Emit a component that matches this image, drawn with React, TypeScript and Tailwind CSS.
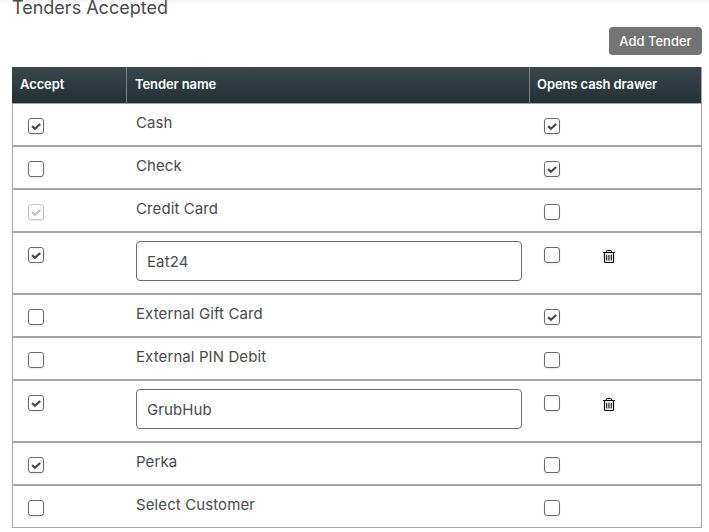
import { useState } from "react";

type Tender = {
  name: string;
  accept: boolean;
  drawer: boolean;
  locked?: boolean;
  custom?: boolean;
};

const initialTenders: Tender[] = [
  { name: "Cash", accept: true, drawer: true },
  { name: "Check", accept: false, drawer: true },
  { name: "Credit Card", accept: true, drawer: false, locked: true },
  { name: "Eat24", accept: true, drawer: false, custom: true },
  { name: "External Gift Card", accept: false, drawer: true },
  { name: "External PIN Debit", accept: false, drawer: false },
  { name: "GrubHub", accept: true, drawer: false, custom: true },
  { name: "Perka", accept: true, drawer: false },
  { name: "Select Customer", accept: false, drawer: false },
];

function Checkbox({
  checked,
  disabled,
  onChange,
}: {
  checked: boolean;
  disabled?: boolean;
  onChange: () => void;
}) {
  return (
    <button
      type="button"
      role="checkbox"
      aria-checked={checked}
      disabled={disabled}
      onClick={onChange}
      className={`flex h-4 w-4 shrink-0 items-center justify-center rounded-[3px] border bg-white shadow-[0_1px_2px_rgba(0,0,0,0.08)] ${
        disabled ? "border-[#c4c4c4] text-[#c4c4c4]" : "border-[#6b6b6b] text-[#4a4a4a]"
      }`}
    >
      {checked && (
        <svg className="h-3.5 w-3.5" viewBox="0 0 14 14" fill="none" stroke="currentColor" strokeWidth="2.3">
          <path d="M3.1 7.1l2.8 2.7L11.2 5" />
        </svg>
      )}
    </button>
  );
}

function TrashIcon() {
  return (
    <svg className="h-3.5 w-3" viewBox="0 0 12 14" fill="none" stroke="#000">
      <path d="M0 2.5h12" strokeWidth="1.1" />
      <path d="M3.5 2.2V1.3q0-.8.8-.8h3.4q.8 0 .8.8v.9" strokeWidth="1" />
      <path d="M1.5 3v8.5q0 1 1 1h7q1 0 1-1V3" strokeWidth="1.2" />
      <path d="M3.5 4.8v5.7M5.2 4.8v5.7M6.8 4.8v5.7M8.5 4.8v5.7" strokeWidth="0.8" />
    </svg>
  );
}

export default function App() {
  const [tenders, setTenders] = useState(initialTenders);

  const update = (index: number, patch: Partial<Tender>) => {
    setTenders(tenders.map((t, i) => (i === index ? { ...t, ...patch } : t)));
  };

  return (
    <div className="h-[532px] bg-white bg-linear-to-b from-[#f4f4f4] to-white to-[4px] pr-[7px] pl-3 font-['Inter','Liberation_Sans',sans-serif] text-[#4a4a4a]">
      <h2 className="h-4 text-[18px] leading-4">Tenders Accepted</h2>

      <div className="mt-[11px] mb-3 flex justify-end">
        <button
          onClick={() => setTenders([...tenders, { name: "", accept: true, drawer: false, custom: true }])}
          className="h-7 w-[93px] rounded bg-[#737373] text-[13px] leading-[28px] font-medium text-white"
        >
          Add Tender
        </button>
      </div>

      {/* Header */}
      <div className="grid h-9 grid-cols-[115px_403px_1fr] border-r border-[#a6a6a6] bg-linear-to-b from-[#37474b] to-[#233137] text-[13px] leading-[35px] font-semibold tracking-[-0.1px] text-white">
        <div className="border-r border-[#7b8487] pl-2">Accept</div>
        <div className="border-r border-[#7b8487] pl-2">Tender name</div>
        <div className="pl-[7px]">Opens cash drawer</div>
      </div>

      {tenders.map((tender, i) => (
        <div
          key={i}
          className={`grid grid-cols-[123px_408px_67px_1fr] items-start border border-[#a6a6a6] bg-white ${
            tender.custom ? "h-[62px]" : "h-[43px]"
          }`}
        >
          <div className="pt-3.5 pl-[15px]">
            <Checkbox
              checked={tender.accept}
              disabled={tender.locked}
              onChange={() => update(i, { accept: !tender.accept })}
            />
          </div>
          {tender.custom ? (
            <div className="pt-2 pr-[22px]">
              <input
                value={tender.name}
                onChange={(e) => update(i, { name: e.target.value })}
                className="block h-10 w-full rounded border border-[#6b6b6b] px-2.5 text-[15px] tracking-[0.1px] outline-none"
              />
            </div>
          ) : (
            <div className="pt-2 text-[15px] leading-[22px] tracking-[0.1px]">{tender.name}</div>
          )}
          <div className="pt-3.5">
            <Checkbox checked={tender.drawer} onChange={() => update(i, { drawer: !tender.drawer })} />
          </div>
          {tender.custom && (
            <button
              aria-label="Delete tender"
              onClick={() => setTenders(tenders.filter((_, n) => n !== i))}
              className="mt-[17px] -ml-2 w-3"
            >
              <TrashIcon />
            </button>
          )}
        </div>
      ))}
    </div>
  );
}
